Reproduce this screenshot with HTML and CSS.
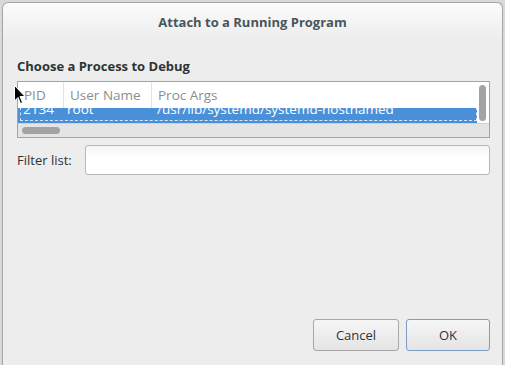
FILE: index.html
```html
<!DOCTYPE html>
<html lang="en">
<head>
    <meta charset="UTF-8">
    <title>Attach to a Running Program</title>
    <link rel="stylesheet" href="styles.css">
</head>
<body>
    <div class="dialog">
        <!-- Title bar -->
        <div class="titlebar">Attach to a Running Program</div>

        <div class="content">
            <h1 class="heading">Choose a Process to Debug</h1>

            <!-- Process list -->
            <div class="tree">
                <div class="tree-main">
                    <div class="tree-header">
                        <div class="col col-pid">PID</div>
                        <div class="col col-user">User Name</div>
                        <div class="col col-args">Proc Args</div>
                    </div>
                    <div class="tree-row">
                        <div class="row-inner">
                            <span class="col-pid">2134</span>
                            <span class="col-user">root</span>
                            <span class="col-args">/usr/lib/systemd/systemd-hostnamed</span>
                        </div>
                    </div>
                </div>
                <div class="vscroll"><div class="vthumb"></div></div>
                <div class="hscroll"><div class="hthumb"></div></div>
            </div>

            <div class="filter">
                <label for="filter">Filter list:</label>
                <input type="text" id="filter">
            </div>

            <div class="buttons">
                <button class="btn">Cancel</button>
                <button class="btn btn-default">OK</button>
            </div>
        </div>
    </div>

    <svg class="cursor" width="12" height="20" viewBox="0 0 12 20">
        <path d="M0.5 0.5 L0.5 16 L4 12.5 L6.5 18.5 L8.5 17.5 L6 11.5 L11 11.5 Z" fill="#000" stroke="#fff" stroke-width="1"/>
    </svg>
</body>
</html>
```

FILE: styles.css
```css
body {
    margin: 0;
    background-color: #d9d9d9;
    font-family: "Open Sans", "DejaVu Sans", sans-serif;
    font-size: 13px;
    color: #2e3436;
    overflow: hidden;
}
.dialog {
    margin: 2px 0 0 2px;
    width: 499px;
    height: 370px;
    border: 1px solid #a5a5a5;
    border-bottom: none;
    border-radius: 6px 6px 0 0;
    background-color: #ededed;
}
.titlebar {
    height: 37px;
    display: flex;
    align-items: center;
    justify-content: center;
    font-weight: bold;
    color: #4a555c;
    border-radius: 6px 6px 0 0;
    background: linear-gradient(#fbfbfb, #ededed);
}
.content {
    padding: 0 12px 0 14px;
}
.heading {
    margin: 0;
    padding-top: 17px;
    font-size: 13px;
    line-height: 18px;
    font-weight: bold;
    color: #2e3436;
}
.tree {
    margin-top: 6px;
    height: 55px;
    border: 1px solid #a3a3a3;
    display: grid;
    grid-template-columns: 1fr 12px;
    grid-template-rows: 41px 14px;
    background-color: #fff;
}
.tree-main {
    overflow: hidden;
}
.tree-header {
    height: 26px;
    display: flex;
    align-items: center;
    color: #8b8e8f;
    font-size: 13.5px;
}
.col {
    height: 26px;
    line-height: 26px;
    padding-left: 6px;
    border-right: 1px solid #e2e2e2;
    box-sizing: border-box;
}
.col-pid { width: 46px; }
.col-user { width: 88px; }
.col-args { border-right: none; }
.tree-row {
    height: 15px;
    overflow: hidden;
    background-color: #4a90d9;
    color: #fff;
    font-size: 13.5px;
}
.row-inner {
    display: flex;
    height: 13px;
    margin-left: 2px;
    border: 1px dashed #d6e6f7;
    border-top: none;
    line-height: 13px;
    margin-top: -1px;
}
.row-inner span {
    display: block;
    padding-left: 2px;
    position: relative;
    top: -4px;
}
.row-inner .col-pid { width: 42px; }
.row-inner .col-user { width: 88px; }
.vscroll {
    background-color: #fff;
    padding: 3px 2px 0 2px;
}
.vthumb {
    width: 7px;
    height: 36px;
    border-radius: 4px;
    background-color: #a3a3a3;
}
.hscroll {
    grid-column: 1 / span 2;
    background-color: #e4e4e4;
    padding: 3px 0 0 4px;
    border-top: 1px solid #d2d2d2;
}
.hthumb {
    width: 38px;
    height: 7px;
    border-radius: 4px;
    background-color: #a3a3a3;
}
.filter {
    margin-top: 7px;
    display: flex;
    align-items: center;
}
.filter label {
    width: 68px;
    color: #2e3436;
}
.filter input {
    flex: 1;
    height: 30px;
    box-sizing: border-box;
    border: 1px solid #b7b7b7;
    border-radius: 3px;
    background: linear-gradient(#f5f5f5, #fff 40%);
    margin: 0;
}
.buttons {
    margin-top: 144px;
    display: flex;
    justify-content: flex-end;
    gap: 7px;
}
.btn {
    height: 32px;
    box-sizing: border-box;
    font-family: "Open Sans", "DejaVu Sans", sans-serif;
    font-size: 13px;
    color: #2e3436;
    border: 1px solid #a8a8a8;
    border-radius: 3px;
    background: linear-gradient(#f6f6f6, #e4e4e4);
}
.btn:first-child { width: 86px; }
.btn-default {
    width: 84px;
    border-color: #7d9dc0;
}
.cursor {
    position: absolute;
    left: 14px;
    top: 85px;
}
```
